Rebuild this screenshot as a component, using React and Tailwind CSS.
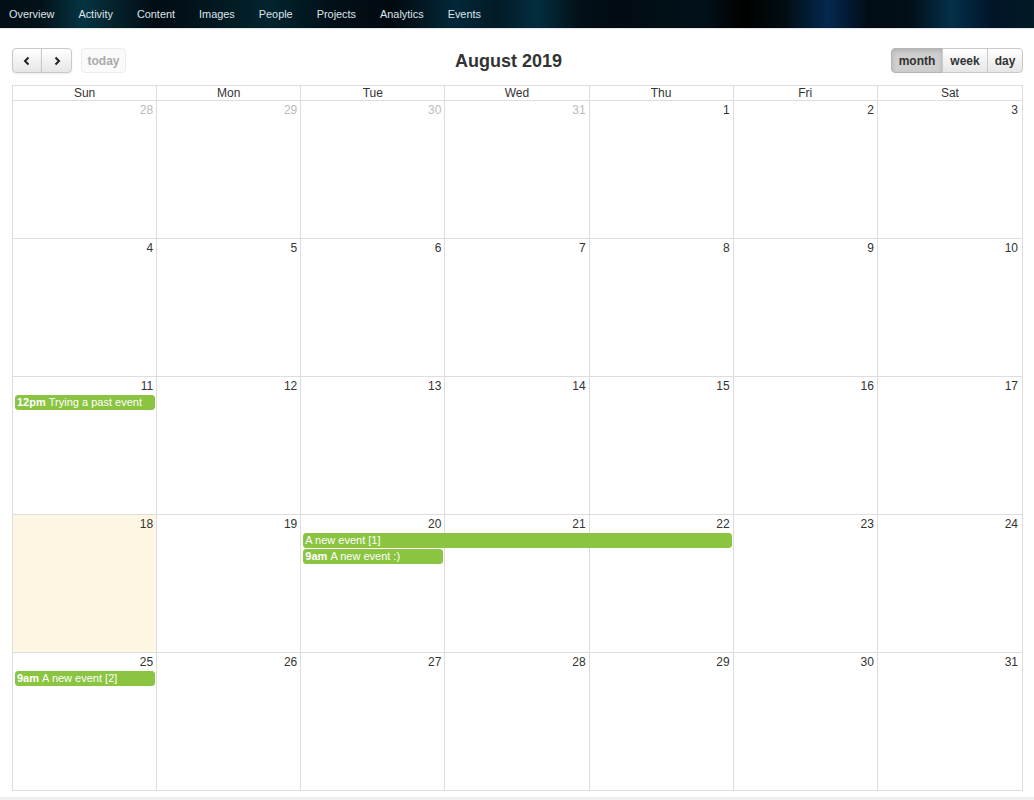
import React from 'react';

const navItems = ['Overview', 'Activity', 'Content', 'Images', 'People', 'Projects', 'Analytics', 'Events'];
const dayNames = ['Sun', 'Mon', 'Tue', 'Wed', 'Thu', 'Fri', 'Sat'];

const colStart = ['col-start-1', 'col-start-2', 'col-start-3', 'col-start-4', 'col-start-5', 'col-start-6', 'col-start-7'];
const colSpan = ['col-span-1', 'col-span-2', 'col-span-3', 'col-span-4', 'col-span-5', 'col-span-6', 'col-span-7'];
const rowStart = ['row-start-1', 'row-start-2', 'row-start-3', 'row-start-4'];

const weeks = [
  { days: [[28, true], [29, true], [30, true], [31, true], [1], [2], [3]], events: [] },
  { days: [[4], [5], [6], [7], [8], [9], [10]], events: [] },
  {
    days: [[11], [12], [13], [14], [15], [16], [17]],
    events: [{ col: 0, span: 1, row: 1, time: '12pm', title: 'Trying a past event' }],
  },
  {
    days: [[18], [19], [20], [21], [22], [23], [24]],
    today: 0,
    events: [
      { col: 2, span: 3, row: 1, title: 'A new event [1]' },
      { col: 2, span: 1, row: 2, time: '9am', title: 'A new event :)' },
    ],
  },
  {
    days: [[25], [26], [27], [28], [29], [30], [31]],
    events: [{ col: 0, span: 1, row: 1, time: '9am', title: 'A new event [2]' }],
  },
];

function Event({ ev }) {
  return (
    <div
      className={`${colStart[ev.col]} ${colSpan[ev.span - 1]} ${rowStart[ev.row]} z-10 mx-[2px] mb-[1px] h-[15px] rounded-[3px] border border-[#8bc440] bg-[#8bc440] px-[1px] text-[11px] leading-[13px] text-white whitespace-nowrap overflow-hidden`}
    >
      {ev.time && <span className="font-bold">{ev.time} </span>}
      {ev.title}
    </div>
  );
}

function Week({ week }) {
  return (
    <div className="grid grid-cols-7 grid-rows-[auto_auto_auto_1fr] h-[138px] border-b border-[#ddd]">
      {week.days.map((d, i) => (
        <div
          key={'bg' + i}
          className={`${colStart[i]} row-span-full ${i < 6 ? 'border-r border-[#ddd]' : ''} ${week.today === i ? 'bg-[#fdf6e2]' : ''}`}
        />
      ))}
      {week.days.map(([n, other], i) => (
        <div
          key={'n' + i}
          className={`${colStart[i]} row-start-1 z-10 pr-[4px] pt-[2px] pb-[2px] text-right text-[12px] leading-[14px] ${other ? 'text-[#bbb]' : 'text-[#333]'}`}
        >
          {n}
        </div>
      ))}
      {week.events.map((ev, i) => (
        <Event key={'e' + i} ev={ev} />
      ))}
    </div>
  );
}

export default function App() {
  return (
    <div className="min-h-[800px] bg-white font-['Liberation_Sans',Arial,sans-serif] text-[#333]">
      <nav className="h-[29px] border-b border-[#e5e5e5] bg-[linear-gradient(90deg,#020e16_0%,#03121a_4%,#043442_8%,#05222c_11%,#020c14_15%,#03161e_20%,#02242e_26%,#021018_32%,#020a10_38%,#032838_44%,#021a26_48%,#032e40_52%,#021018_56%,#020a12_60%,#011016_64%,#02101a_68%,#000000_72%,#020e14_76%,#042850_80%,#020c16_84%,#020f18_88%,#03304a_92%,#021428_96%,#021a26_100%)]">
        <ul className="flex h-[28px] items-center pl-[9px] text-[10.9px] text-[#dde4ea]">
          {navItems.map((item) => (
            <li key={item} className="mr-[24px] cursor-pointer">
              {item}
            </li>
          ))}
        </ul>
      </nav>

      <div className="pl-[12px] pr-[11px] pt-[19px]">
        <div className="mb-[12px] flex items-center justify-between">
          <div className="flex items-center">
            <div className="flex">
              <button className="flex h-[25px] w-[30px] items-center justify-center rounded-l-[4px] border border-[#c9c9c9] bg-[linear-gradient(#ffffff,#e6e6e6)] shadow-[0_1px_2px_rgba(0,0,0,0.08)]">
                <svg width="10" height="10" viewBox="0 0 10 10">
                  <path d="M6.5 1.5 L3 5 L6.5 8.5" fill="none" stroke="#222" strokeWidth="2" />
                </svg>
              </button>
              <button className="-ml-px flex h-[25px] w-[31px] items-center justify-center rounded-r-[4px] border border-[#c9c9c9] bg-[linear-gradient(#ffffff,#e6e6e6)] shadow-[0_1px_2px_rgba(0,0,0,0.08)]">
                <svg width="10" height="10" viewBox="0 0 10 10">
                  <path d="M3.5 1.5 L7 5 L3.5 8.5" fill="none" stroke="#222" strokeWidth="2" />
                </svg>
              </button>
            </div>
            <button className="ml-[9px] h-[25px] w-[45px] rounded-[4px] border border-[#ececec] bg-[#fafafa] text-[12px] font-bold text-[#a9a9a9]">
              today
            </button>
          </div>
          <h2 className="text-[18px] font-bold leading-[22px] text-[#333]">August 2019</h2>
          <div className="flex text-[12px] font-bold text-[#333]">
            <button className="h-[25px] w-[52px] rounded-l-[4px] border border-[#b5b5b5] bg-[#cfcfcf] shadow-[inset_0_2px_4px_rgba(0,0,0,0.15)]">
              month
            </button>
            <button className="-ml-px h-[25px] w-[46px] border border-[#c9c9c9] bg-[linear-gradient(#ffffff,#e6e6e6)]">
              week
            </button>
            <button className="-ml-px h-[25px] w-[36px] rounded-r-[4px] border border-[#c9c9c9] bg-[linear-gradient(#ffffff,#e6e6e6)]">
              day
            </button>
          </div>
        </div>

        <div className="border-x border-t border-[#ddd]">
          <div className="grid grid-cols-7 border-b border-[#ddd] text-[12px] leading-[14px] text-[#333]">
            {dayNames.map((d, i) => (
              <div key={d} className={`text-center ${i < 6 ? 'border-r border-[#ddd]' : ''}`}>
                {d}
              </div>
            ))}
          </div>
          {weeks.map((w, i) => (
            <Week key={i} week={w} />
          ))}
        </div>
      </div>
      <div className="mt-[6px] h-[20px] bg-[#eeeeee]" />
    </div>
  );
}
